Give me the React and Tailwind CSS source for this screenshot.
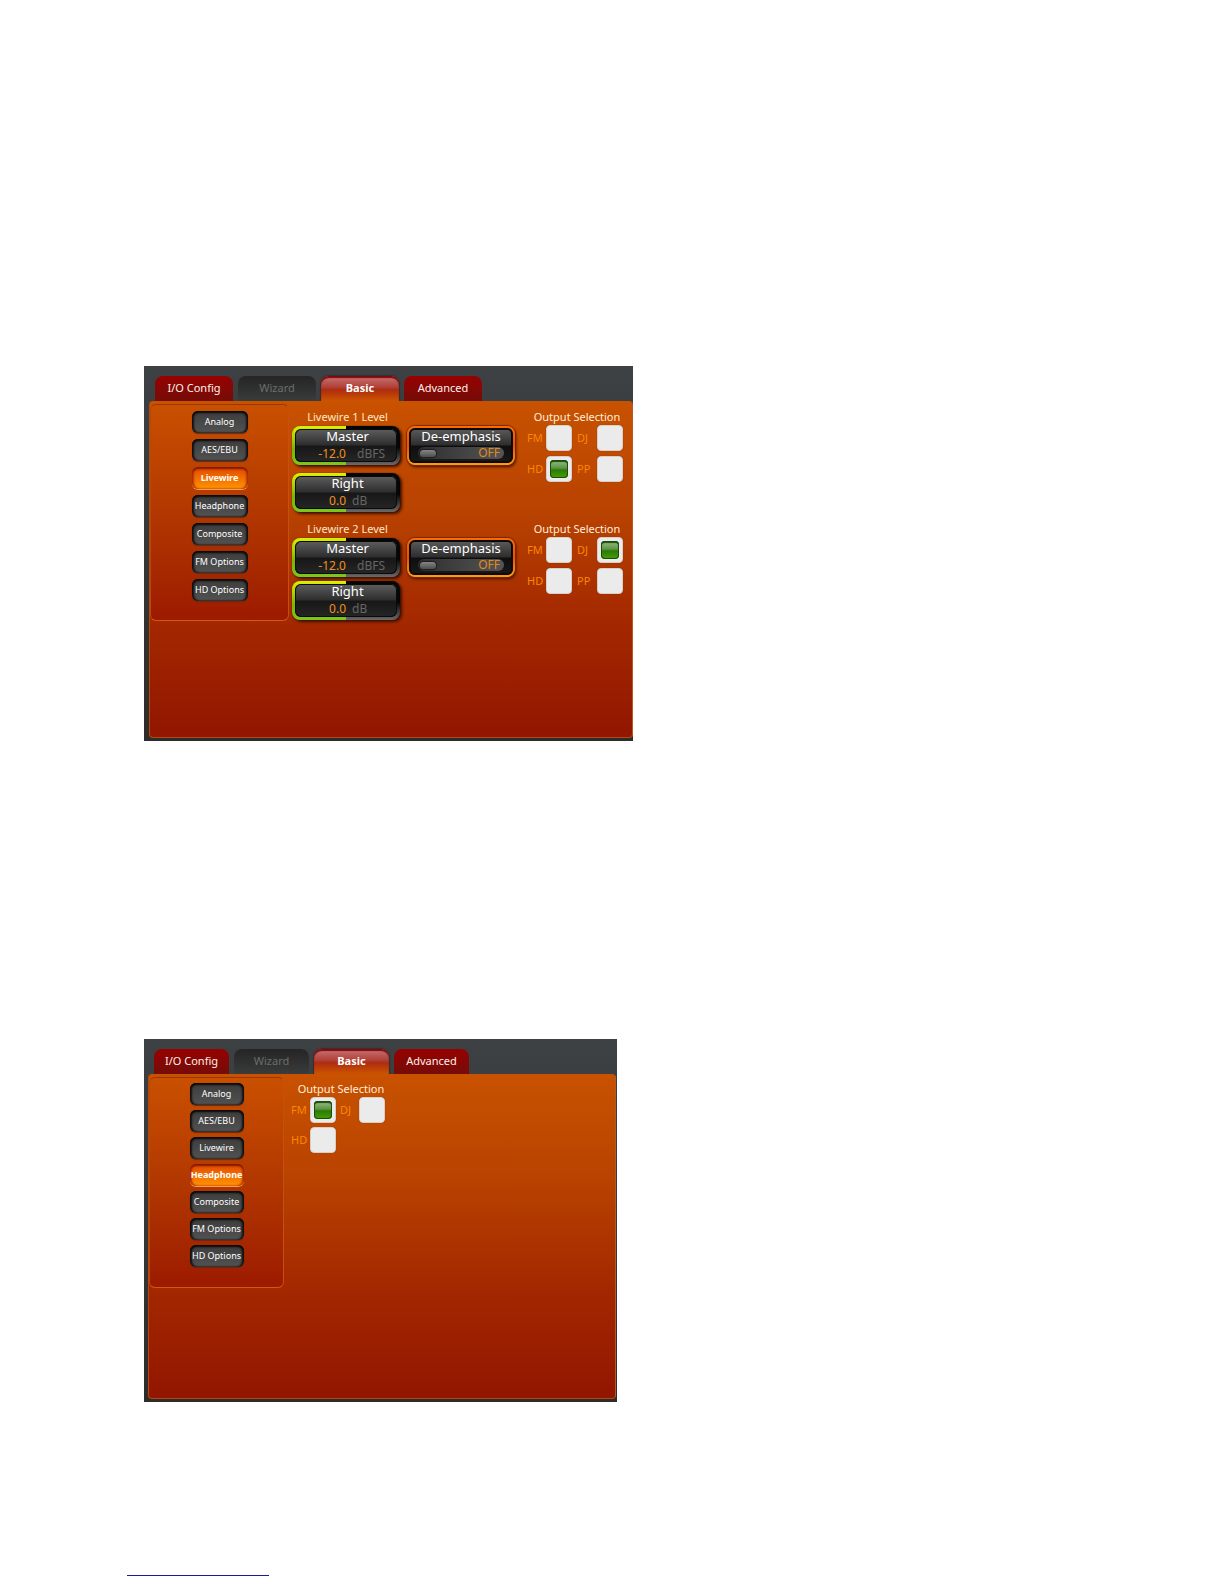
import React, { useState } from "react";
import clsx from "clsx";

const TABS = ["I/O Config", "Wizard", "Basic", "Advanced"];
const SECTIONS = ["Analog", "AES/EBU", "Livewire", "Headphone", "Composite", "FM Options", "HD Options"];

function Tabs({ compact }) {
  return (
    <div role="tablist" className="flex gap-[5px] pt-[10px] pl-[6px]">
      {TABS.map((name) => (
        <button
          key={name}
          type="button"
          role="tab"
          aria-selected={name === "Basic"}
          disabled={name === "Wizard"}
          className={clsx(
            "flex h-[25px] justify-center rounded-t-lg text-[11px] leading-[23px] whitespace-nowrap",
            compact ? "w-[75px]" : "w-[78px]",
            name === "Wizard" && "bg-linear-to-b from-[#252525] to-[#3a3b3b] text-[#6c6c6c]",
            name === "Basic" &&
              "bg-[linear-gradient(180deg,#c87474_0%,#b04038_45%,#ae2c10_55%,#cc5400_100%)] font-bold text-white shadow-[inset_0_2px_1px_#7c0808,0_0_2px_#2a0a05]",
            (name === "I/O Config" || name === "Advanced") &&
              "bg-linear-to-b from-[#970000] to-[#740c08] text-[#fff0e8]"
          )}
        >
          {name}
        </button>
      ))}
    </div>
  );
}

function Sections({ initial, compact }) {
  const [active, setActive] = useState(initial);
  return (
    <nav
      className={clsx(
        "flex shrink-0 flex-col items-center rounded-md border border-t-[#983700] border-r-[#c8500c] border-b-[#d25a08] border-l-[#b84808] bg-linear-to-b from-[#c95000] to-[#9c1a00]",
        compact ? "h-[211px] w-[135px] gap-[5px] pt-[5px]" : "h-[217px] w-[139px] gap-[6px] pt-[6px]"
      )}
    >
      {SECTIONS.map((name) => (
        <button
          key={name}
          type="button"
          aria-pressed={name === active}
          onClick={() => setActive(name)}
          className={clsx(
            "flex h-[22px] justify-center rounded-md text-[9px] leading-[21px] whitespace-nowrap text-white",
            compact ? "w-[54px]" : "w-[56px]",
            name === active
              ? "bg-linear-to-b from-[#e04400] to-[#ff9400] font-bold shadow-[inset_0_2px_2px_#801800,inset_2px_0_2px_#c03800,inset_-2px_0_2px_#c03800,0_1px_0_#f0a060]"
              : "bg-linear-to-b from-[#3c3c3c] to-[#525252] shadow-[inset_0_2px_2px_#0a0a0a,inset_2px_0_2px_#141414,inset_-2px_0_2px_#141414,0_1px_1px_#6a2a10]"
          )}
        >
          {name}
        </button>
      ))}
    </nav>
  );
}

function LevelButton({ name, value, unit }) {
  return (
    <button
      type="button"
      className="block h-[39px] w-[108px] rounded-lg bg-[linear-gradient(180deg,#dcf000,#7cb400_60%,#7ac81c),linear-gradient(180deg,#060606_55%,#6a6a6a)] bg-[length:50%_100%,100%_100%] bg-no-repeat p-[3px] shadow-[0_0_1px_#1a0c04,2px_2px_3px_#401000]"
    >
      <span className="flex h-full flex-col rounded-md bg-[linear-gradient(180deg,#5e5e5e_0%,#2e2e2e_48%,#171717_52%,#262626_100%)] shadow-[inset_0_0_0_1px_#0a0a0a]">
        <span className="block h-[16px] pl-[3px] text-center text-[13px] leading-[14px] text-white">{name}</span>
        <span className={clsx("flex h-[17px] items-center text-[12px] leading-[17px]", unit === "dB" ? "gap-[6px]" : "gap-[11px]")}>
          <span className="w-[51px] text-right text-[#f09020]">{value}</span>
          <span className="text-[#666]">{unit}</span>
        </span>
      </span>
    </button>
  );
}

function DeEmphasis() {
  const [on, setOn] = useState(false);
  return (
    <button
      type="button"
      role="switch"
      aria-checked={on}
      onClick={() => setOn(!on)}
      className="block h-[39px] w-[108px] rounded-lg bg-linear-to-b from-[#ff6a00] via-[#f05000] to-[#ff9c10] p-[2px] shadow-[0_0_1px_1px_#7a2800,1px_2px_3px_#401000]"
    >
      <span className="flex h-full flex-col rounded-md bg-[linear-gradient(180deg,#5e5e5e_0%,#2e2e2e_48%,#0e0e0e_52%,#1a1a1a_100%)] px-[9px] shadow-[inset_0_0_0_2px_#0a0a0a]">
        <span className="flex h-[19px] justify-center text-[13px] leading-[16px] whitespace-nowrap text-white">De-emphasis</span>
        <span
          className={clsx(
            "flex h-[12px] items-center justify-between rounded-full bg-linear-to-r from-[#303030] to-[#545454] pr-[4px] pl-[2px]",
            on && "flex-row-reverse"
          )}
        >
          <span className="h-[7px] w-[16px] rounded-full bg-linear-to-b from-[#858585] to-[#4e4e4e] shadow-[0_0_1px_1px_#1c1c1c]" />
          <span className="text-[12px] leading-[12px] text-[#e08a20]">{on ? "ON" : "OFF"}</span>
        </span>
      </span>
    </button>
  );
}

function OutputSelection({ id, outputs, checked, compact }) {
  return (
    <fieldset className="min-w-0">
      <legend className="h-[16px] w-[100px] text-center text-[11px] leading-[16px] whitespace-nowrap text-[#ffeedd]">
        Output Selection
      </legend>
      <div
        className={clsx(
          "grid items-center",
          compact ? "grid-cols-[19px_30px_19px_26px] gap-y-[4px]" : "grid-cols-[19px_31px_20px_26px] gap-y-[5px]"
        )}
      >
        {outputs.map((name) => (
          <React.Fragment key={name}>
            <label htmlFor={`${id}-${name}`} className="text-[11px] leading-[16px] text-[#fb8600]">
              {name}
            </label>
            <input
              id={`${id}-${name}`}
              type="checkbox"
              defaultChecked={name === checked}
              className="grid size-[26px] appearance-none place-items-center rounded-sm border border-[#d8cfc8] bg-[#ebebeb] shadow-[0_0_1px_#803000] checked:before:size-[18px] checked:before:rounded-sm checked:before:bg-[linear-gradient(180deg,#9cc08c_0%,#5c9444_45%,#2c7a08_55%,#46a000_100%)] checked:before:shadow-[inset_0_0_0_1px_#1c4c0a,inset_0_2px_1px_#1c4c0a] checked:before:content-['']"
            />
          </React.Fragment>
        ))}
      </div>
    </fieldset>
  );
}

function LivewireGroup({ number, checked, tight }) {
  return (
    <section className="flex">
      <div>
        <h2 className="h-[17px] pl-[3px] text-center text-[11px] leading-[16px] text-[#ffe8c8]">Livewire {number} Level</h2>
        <div className={clsx("flex flex-col", tight ? "gap-[4px]" : "gap-[8px]")}>
          <LevelButton name="Master" value="-12.0" unit="dBFS" />
          <LevelButton name="Right" value="0.0" unit="dB" />
        </div>
      </div>
      <div className="pt-[17px] pl-[7px]">
        <DeEmphasis />
      </div>
      <div className="pl-[12px]">
        <OutputSelection id={`livewire-${number}`} outputs={["FM", "DJ", "HD", "PP"]} checked={checked} />
      </div>
    </section>
  );
}

function Screen({ section, compact, children }) {
  return (
    <section
      className={clsx(
        "flex w-full flex-col bg-linear-to-b from-[#3d4144] to-[#2e2c2a] pb-[3px]",
        compact ? "min-h-[363px] max-w-[473px] pr-px pl-[4px]" : "min-h-[375px] max-w-[489px] pl-[5px]"
      )}
    >
      <Tabs compact={compact} />
      <div className="flex flex-1 rounded-sm border border-t-[#c85200] border-r-[#b85a20] border-b-[#b04a10] border-l-[#b04a10] bg-[linear-gradient(180deg,#c85200_0%,#b84200_33%,#a32800_66%,#921600_100%)] pt-[2px]">
        <Sections initial={section} compact={compact} />
        {children}
      </div>
    </section>
  );
}

export default function App() {
  return (
    <main className="flex min-h-screen flex-col items-start bg-white px-[144px] pt-[366px] font-['Noto_Sans',sans-serif]">
      <Screen section="Livewire">
        <div className="flex flex-col gap-[9px] pt-[5px] pl-[3px]">
          <LivewireGroup number={1} checked="HD" />
          <LivewireGroup number={2} checked="DJ" tight />
        </div>
      </Screen>
      <div className="mt-[298px] w-full">
        <Screen section="Headphone" compact>
          <div className="pt-[4px] pl-[7px]">
            <OutputSelection id="headphone" outputs={["FM", "DJ", "HD"]} checked="FM" compact />
          </div>
        </Screen>
      </div>
      <a href="#top" className="mt-[160px] -ml-[17px] block h-[14px] w-[142px] border-b border-[#1a1aa0]" />
    </main>
  );
}
